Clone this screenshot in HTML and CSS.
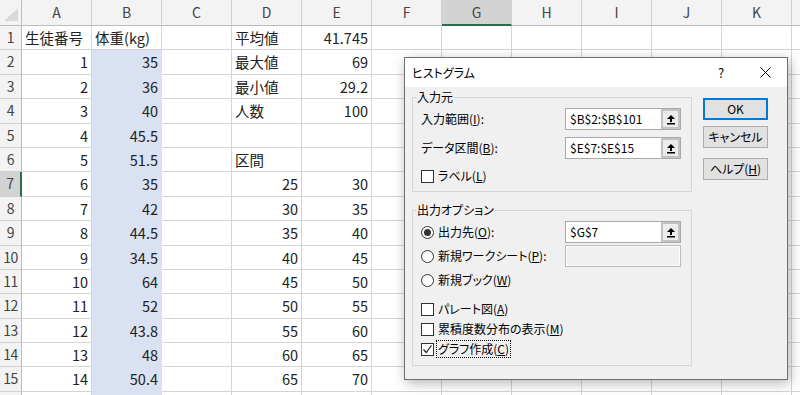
FILE: index.html
```html
<!DOCTYPE html>
<html lang="ja">
<head>
    <meta charset="UTF-8">
    <meta name="viewport" content="width=device-width, initial-scale=1.0">
    <title>ヒストグラム</title>
    <link rel="stylesheet" href="styles.css">
</head>
<body>
<div class="sheet">
    <!-- 列見出し -->
    <div class="row head">
        <div class="corner"><svg width="21" height="25" viewBox="0 0 21 25"><polygon points="4,21 18,21 18,8" fill="#d9d9d9"/></svg></div>
        <div class="ch">A</div><div class="ch">B</div><div class="ch">C</div><div class="ch">D</div>
        <div class="ch">E</div><div class="ch">F</div><div class="ch sel">G</div><div class="ch">H</div>
        <div class="ch">I</div><div class="ch">J</div><div class="ch">K</div><div class="ch"></div>
    </div>

    <div class="row"><div class="rh">1</div><div class="c">生徒番号</div><div class="c">体重(kg)</div><div class="c"></div><div class="c">平均値</div><div class="c n">41.745</div><div class="c"></div><div class="c"></div><div class="c"></div><div class="c"></div><div class="c"></div><div class="c"></div><div class="c"></div></div>
    <div class="row"><div class="rh">2</div><div class="c n">1</div><div class="c n b">35</div><div class="c"></div><div class="c">最大値</div><div class="c n">69</div><div class="c"></div><div class="c"></div><div class="c"></div><div class="c"></div><div class="c"></div><div class="c"></div><div class="c"></div></div>
    <div class="row"><div class="rh">3</div><div class="c n">2</div><div class="c n b">36</div><div class="c"></div><div class="c">最小値</div><div class="c n">29.2</div><div class="c"></div><div class="c"></div><div class="c"></div><div class="c"></div><div class="c"></div><div class="c"></div><div class="c"></div></div>
    <div class="row"><div class="rh">4</div><div class="c n">3</div><div class="c n b">40</div><div class="c"></div><div class="c">人数</div><div class="c n">100</div><div class="c"></div><div class="c"></div><div class="c"></div><div class="c"></div><div class="c"></div><div class="c"></div><div class="c"></div></div>
    <div class="row"><div class="rh">5</div><div class="c n">4</div><div class="c n b">45.5</div><div class="c"></div><div class="c"></div><div class="c"></div><div class="c"></div><div class="c"></div><div class="c"></div><div class="c"></div><div class="c"></div><div class="c"></div><div class="c"></div></div>
    <div class="row"><div class="rh">6</div><div class="c n">5</div><div class="c n b">51.5</div><div class="c"></div><div class="c">区間</div><div class="c"></div><div class="c"></div><div class="c"></div><div class="c"></div><div class="c"></div><div class="c"></div><div class="c"></div><div class="c"></div></div>
    <div class="row"><div class="rh sel">7</div><div class="c n">6</div><div class="c n b">35</div><div class="c"></div><div class="c n">25</div><div class="c n">30</div><div class="c"></div><div class="c"></div><div class="c"></div><div class="c"></div><div class="c"></div><div class="c"></div><div class="c"></div></div>
    <div class="row"><div class="rh">8</div><div class="c n">7</div><div class="c n b">42</div><div class="c"></div><div class="c n">30</div><div class="c n">35</div><div class="c"></div><div class="c"></div><div class="c"></div><div class="c"></div><div class="c"></div><div class="c"></div><div class="c"></div></div>
    <div class="row"><div class="rh">9</div><div class="c n">8</div><div class="c n b">44.5</div><div class="c"></div><div class="c n">35</div><div class="c n">40</div><div class="c"></div><div class="c"></div><div class="c"></div><div class="c"></div><div class="c"></div><div class="c"></div><div class="c"></div></div>
    <div class="row"><div class="rh">10</div><div class="c n">9</div><div class="c n b">34.5</div><div class="c"></div><div class="c n">40</div><div class="c n">45</div><div class="c"></div><div class="c"></div><div class="c"></div><div class="c"></div><div class="c"></div><div class="c"></div><div class="c"></div></div>
    <div class="row"><div class="rh">11</div><div class="c n">10</div><div class="c n b">64</div><div class="c"></div><div class="c n">45</div><div class="c n">50</div><div class="c"></div><div class="c"></div><div class="c"></div><div class="c"></div><div class="c"></div><div class="c"></div><div class="c"></div></div>
    <div class="row"><div class="rh">12</div><div class="c n">11</div><div class="c n b">52</div><div class="c"></div><div class="c n">50</div><div class="c n">55</div><div class="c"></div><div class="c"></div><div class="c"></div><div class="c"></div><div class="c"></div><div class="c"></div><div class="c"></div></div>
    <div class="row"><div class="rh">13</div><div class="c n">12</div><div class="c n b">43.8</div><div class="c"></div><div class="c n">55</div><div class="c n">60</div><div class="c"></div><div class="c"></div><div class="c"></div><div class="c"></div><div class="c"></div><div class="c"></div><div class="c"></div></div>
    <div class="row"><div class="rh">14</div><div class="c n">13</div><div class="c n b">48</div><div class="c"></div><div class="c n">60</div><div class="c n">65</div><div class="c"></div><div class="c"></div><div class="c"></div><div class="c"></div><div class="c"></div><div class="c"></div><div class="c"></div></div>
    <div class="row"><div class="rh">15</div><div class="c n">14</div><div class="c n b">50.4</div><div class="c"></div><div class="c n">65</div><div class="c n">70</div><div class="c"></div><div class="c"></div><div class="c"></div><div class="c"></div><div class="c"></div><div class="c"></div><div class="c"></div></div>
    <div class="row"><div class="rh"></div><div class="c n"></div><div class="c n b"></div><div class="c"></div><div class="c"></div><div class="c"></div><div class="c"></div><div class="c"></div><div class="c"></div><div class="c"></div><div class="c"></div><div class="c"></div><div class="c"></div></div>

    <!-- ダイアログ -->
    <div class="dialog">
        <div class="titlebar">
            <span class="title">ヒストグラム</span>
            <span class="help">?</span>
            <span class="close"><svg width="11" height="11" viewBox="0 0 11 11"><path d="M0.5 0.5 L10.5 10.5 M10.5 0.5 L0.5 10.5" stroke="#000" stroke-width="1"/></svg></span>
        </div>
        <div class="dialog-body">
            <div class="groups">
                <fieldset class="group">
                    <legend>入力元</legend>
                    <div class="field-row">
                        <span class="lbl">入力範囲(<u>I</u>):</span>
                        <div class="ref">
                            <span class="ref-text">$B$2:$B$101</span>
                            <span class="ref-btn"><svg width="10" height="11" viewBox="0 0 10 11"><path d="M5 1 L9 5 H6 V8 H4 V5 H1 Z" fill="#000"/><rect x="1" y="9" width="8" height="1.5" fill="#000"/></svg></span>
                        </div>
                    </div>
                    <div class="field-row gap7">
                        <span class="lbl">データ区間(<u>B</u>):</span>
                        <div class="ref">
                            <span class="ref-text">$E$7:$E$15</span>
                            <span class="ref-btn"><svg width="10" height="11" viewBox="0 0 10 11"><path d="M5 1 L9 5 H6 V8 H4 V5 H1 Z" fill="#000"/><rect x="1" y="9" width="8" height="1.5" fill="#000"/></svg></span>
                        </div>
                    </div>
                    <div class="opt label-opt"><span class="check"></span><span>ラベル(<u>L</u>)</span></div>
                </fieldset>

                <fieldset class="group group-out">
                    <legend>出力オプション</legend>
                    <div class="field-row">
                        <div class="opt"><span class="radio on"></span><span>出力先(<u>O</u>):</span></div>
                        <div class="ref">
                            <span class="ref-text">$G$7</span>
                            <span class="ref-btn"><svg width="10" height="11" viewBox="0 0 10 11"><path d="M5 1 L9 5 H6 V8 H4 V5 H1 Z" fill="#000"/><rect x="1" y="9" width="8" height="1.5" fill="#000"/></svg></span>
                        </div>
                    </div>
                    <div class="field-row gap2">
                        <div class="opt"><span class="radio"></span><span>新規ワークシート(<u>P</u>):</span></div>
                        <div class="ref disabled"></div>
                    </div>
                    <div class="field-row gap2">
                        <div class="opt"><span class="radio"></span><span>新規ブック(<u>W</u>)</span></div>
                    </div>
                    <div class="checks">
                        <div class="opt"><span class="check"></span><span>パレート図(<u>A</u>)</span></div>
                        <div class="opt"><span class="check"></span><span>累積度数分布の表示(<u>M</u>)</span></div>
                        <div class="opt"><span class="check on"><svg width="11" height="11" viewBox="0 0 11 11"><path d="M1.5 5.5 L4.2 8.5 L9.5 1.5" stroke="#222" stroke-width="1.2" fill="none"/></svg></span><span class="focus">グラフ作成(<u>C</u>)</span></div>
                    </div>
                </fieldset>
            </div>
            <div class="buttons">
                <button class="btn default">OK</button>
                <button class="btn">キャンセル</button>
                <button class="btn help-btn">ヘルプ(<u>H</u>)</button>
            </div>
        </div>
    </div>
</div>
</body>
</html>
```

FILE: styles.css
```css
body {
    margin: 0;
    font-family: "Noto Sans CJK JP", "Noto Sans", sans-serif;
    background-color: #fff;
    overflow: hidden;
}
.sheet {
    position: relative;
    width: 800px;
    height: 395px;
    overflow: hidden;
}

/* シート */
.row {
    display: flex;
    height: 24.4px;
}
.row.head {
    height: 26px;
}
.c, .ch {
    flex: none;
    width: 70px;
    box-sizing: border-box;
    border-right: 1px solid #d4d4d4;
    border-bottom: 1px solid #d4d4d4;
    white-space: nowrap;
    overflow: hidden;
}
.c {
    padding: 0 3px;
    font-size: 14.5px;
    line-height: 23px;
    color: #222;
}
.c.n {
    text-align: right;
}
.c.b {
    background-color: #d9e1f2;
    border-color: #d9e1f2;
}
.ch {
    background-color: #f3f3f3;
    border-bottom-color: #bdbdbd;
    border-right-color: #d0d0d0;
    text-align: center;
    font-size: 14px;
    line-height: 25px;
    color: #444;
}
.ch.sel {
    background-color: #d3d3d3;
    border-bottom: 2px solid #217346;
    line-height: 24px;
}
.corner, .rh {
    flex: none;
    width: 22px;
    box-sizing: border-box;
    background-color: #f3f3f3;
    border-right: 1px solid #bdbdbd;
    border-bottom: 1px solid #d0d0d0;
}
.corner {
    border-bottom-color: #bdbdbd;
}
.corner svg {
    display: block;
}
.rh {
    text-align: center;
    font-size: 14px;
    line-height: 23px;
    color: #444;
    letter-spacing: -0.5px;
}
.rh.sel {
    background-color: #d3d3d3;
    border-right: 2px solid #217346;
}

/* ダイアログ */
.dialog {
    position: absolute;
    left: 404px;
    top: 57px;
    width: 384px;
    box-sizing: border-box;
    border: 1px solid #707070;
    background-color: #f0f0f0;
    box-shadow: 2px 3px 12px rgba(0, 0, 0, 0.3);
    font-size: 12px;
    line-height: 16px;
    color: #000;
    font-feature-settings: "palt";
}
.titlebar {
    display: flex;
    align-items: center;
    height: 29px;
    background-color: #fff;
    padding: 0 7px;
}
.title {
    flex: 1;
}
.help {
    width: 20px;
    text-align: center;
    font-size: 13px;
}
.close {
    width: 30px;
    margin-left: 19px;
    display: flex;
    justify-content: center;
}
.close svg {
    display: block;
}
.dialog-body {
    display: flex;
    gap: 11px;
    padding: 2px 19px 13px 7px;
}
.groups {
    width: 280px;
}
.group {
    margin: 0;
    min-width: 0;
    box-sizing: border-box;
    width: 280px;
    border: 1px solid #d5d5d5;
    padding: 3px 10px 6px 8px;
}
.group legend {
    padding: 0 1px;
    margin-left: -5px;
    line-height: 16px;
}
.group-out {
    margin-top: 10px;
}
.field-row {
    display: flex;
    align-items: center;
    justify-content: space-between;
    height: 22px;
}
.field-row.gap7 {
    margin-top: 7px;
}
.field-row.gap2 {
    margin-top: 2px;
}
.ref {
    display: flex;
    width: 116px;
    height: 22px;
    box-sizing: border-box;
    border: 1px solid #a9a9a9;
    background-color: #fff;
}
.ref.disabled {
    background-color: #f0f0f0;
    border-color: #bcbcbc;
    box-shadow: inset 0 0 0 1px #fbfbfb;
}
.ref-text {
    flex: 1;
    padding-left: 4px;
    line-height: 20px;
}
.ref-btn {
    width: 19px;
    display: flex;
    align-items: center;
    justify-content: center;
    background-color: #ececec;
    box-shadow: inset 0 0 0 2px #c2c2c2;
}
.opt {
    display: flex;
    align-items: center;
    gap: 4px;
    height: 20px;
}
.label-opt {
    margin-top: 8px;
    height: 18px;
}
.checks {
    margin-top: 8px;
}
.radio, .check {
    width: 13px;
    height: 13px;
    box-sizing: border-box;
    border: 1px solid #333;
    background-color: #fff;
    display: flex;
    align-items: center;
    justify-content: center;
}
.radio {
    border-radius: 50%;
}
.radio.on::after {
    content: "";
    width: 7px;
    height: 7px;
    border-radius: 50%;
    background-color: #333;
}
.check svg {
    display: block;
}
.focus {
    outline: 1px dotted #000;
    padding: 0 1px;
    margin-left: -1px;
}
.buttons {
    display: flex;
    flex-direction: column;
    gap: 6px;
    margin-top: 9px;
}
.btn {
    width: 65px;
    height: 22px;
    box-sizing: border-box;
    border: 1px solid #adadad;
    background-color: #e1e1e1;
    font: inherit;
    font-size: 12px;
    line-height: 16px;
    color: #000;
    padding: 0;
    font-feature-settings: "palt";
}
.btn.default {
    border-color: #0078d7;
    box-shadow: inset 0 0 0 1px #0078d7;
}
.btn.help-btn {
    margin-top: 4px;
}
```
